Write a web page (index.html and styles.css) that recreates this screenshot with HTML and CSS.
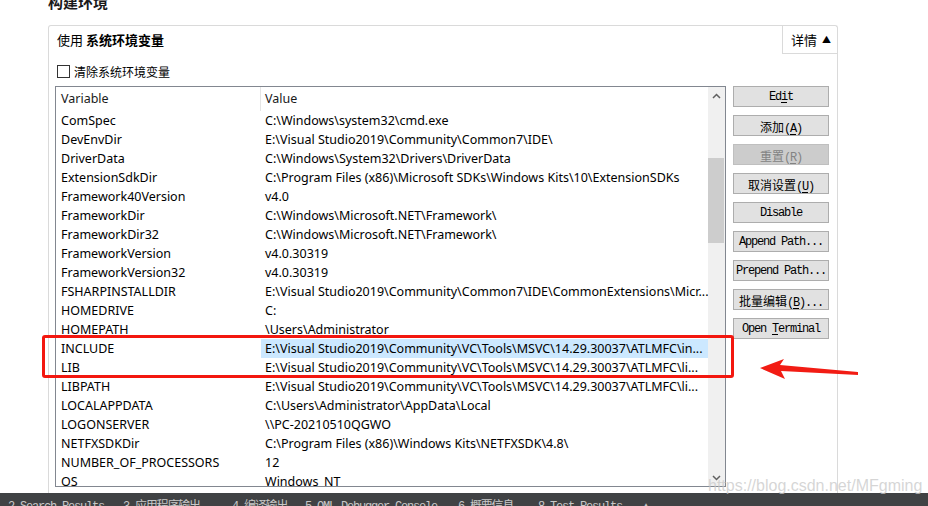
FILE: index.html
```html
<!DOCTYPE html>
<html>
<head>
<meta charset="utf-8">
<link rel="stylesheet" href="styles.css">
</head>
<body>
<div class="page">
  <div class="main">
    <h2 class="title">构建环境</h2>
    <div class="panel">
      <div class="ph">
        <div class="ph-text">使用 <b>系统环境变量</b></div>
        <div class="details">详情 <span class="tri">▲</span></div>
      </div>
      <label class="chk"><span class="box"></span>清除系统环境变量</label>
      <div class="body">
        <div class="list">
          <div class="cols">
            <div class="hdr"><div class="c1 hc1">Variable</div><div class="c2">Value</div></div>
            <div class="row"><div class="c1">ComSpec</div><div class="c2">C:\Windows\system32\cmd.exe</div></div>
            <div class="row"><div class="c1">DevEnvDir</div><div class="c2">E:\Visual Studio2019\Community\Common7\IDE\</div></div>
            <div class="row"><div class="c1">DriverData</div><div class="c2">C:\Windows\System32\Drivers\DriverData</div></div>
            <div class="row"><div class="c1">ExtensionSdkDir</div><div class="c2">C:\Program Files (x86)\Microsoft SDKs\Windows Kits\10\ExtensionSDKs</div></div>
            <div class="row"><div class="c1">Framework40Version</div><div class="c2">v4.0</div></div>
            <div class="row"><div class="c1">FrameworkDir</div><div class="c2">C:\Windows\Microsoft.NET\Framework\</div></div>
            <div class="row"><div class="c1">FrameworkDir32</div><div class="c2">C:\Windows\Microsoft.NET\Framework\</div></div>
            <div class="row"><div class="c1">FrameworkVersion</div><div class="c2">v4.0.30319</div></div>
            <div class="row"><div class="c1">FrameworkVersion32</div><div class="c2">v4.0.30319</div></div>
            <div class="row"><div class="c1">FSHARPINSTALLDIR</div><div class="c2">E:\Visual Studio2019\Community\Common7\IDE\CommonExtensions\Micr...</div></div>
            <div class="row"><div class="c1">HOMEDRIVE</div><div class="c2">C:</div></div>
            <div class="row"><div class="c1">HOMEPATH</div><div class="c2">\Users\Administrator</div></div>
            <div class="row sel"><div class="c1">INCLUDE</div><div class="c2">E:\Visual Studio2019\Community\VC\Tools\MSVC\14.29.30037\ATLMFC\in...</div></div>
            <div class="row"><div class="c1">LIB</div><div class="c2">E:\Visual Studio2019\Community\VC\Tools\MSVC\14.29.30037\ATLMFC\li...</div></div>
            <div class="row"><div class="c1">LIBPATH</div><div class="c2">E:\Visual Studio2019\Community\VC\Tools\MSVC\14.29.30037\ATLMFC\li...</div></div>
            <div class="row"><div class="c1">LOCALAPPDATA</div><div class="c2">C:\Users\Administrator\AppData\Local</div></div>
            <div class="row"><div class="c1">LOGONSERVER</div><div class="c2">\\PC-20210510QGWO</div></div>
            <div class="row"><div class="c1">NETFXSDKDir</div><div class="c2">C:\Program Files (x86)\Windows Kits\NETFXSDK\4.8\</div></div>
            <div class="row"><div class="c1">NUMBER_OF_PROCESSORS</div><div class="c2">12</div></div>
            <div class="row"><div class="c1">OS</div><div class="c2">Windows_NT</div></div>
          </div>
          <div class="sb">
            <div class="sb-btn"><svg width="9" height="6" viewBox="0 0 9 6"><polyline points="1,5 4.5,1.5 8,5" fill="none" stroke="#606060" stroke-width="1.5"/></svg></div>
            <div class="sb-gap"></div>
            <div class="thumb"></div>
            <div class="sb-fill"></div>
            <div class="sb-btn"><svg width="9" height="6" viewBox="0 0 9 6"><polyline points="1,1 4.5,4.5 8,1" fill="none" stroke="#606060" stroke-width="1.5"/></svg></div>
          </div>
        </div>
        <div class="btns">
          <div class="btn">Ed<u>i</u>t</div>
          <div class="btn"><span class="cj">添加</span>(<u>A</u>)</div>
          <div class="btn dis"><span class="cj">重置</span>(<u>R</u>)</div>
          <div class="btn"><span class="cj">取消设置</span>(<u>U</u>)</div>
          <div class="btn">Disable</div>
          <div class="btn">Append Path...</div>
          <div class="btn">Prepend Path...</div>
          <div class="btn"><span class="cj">批量编辑</span>(<u>B</u>)...</div>
          <div class="btn">Open <u>T</u>erminal</div>
        </div>
      </div>
    </div>
  </div>
  <div class="bar">
    <span class="bi b1">2 Search Results</span>
    <span class="bi b2">3 应用程序输出</span>
    <span class="bi b3">4 编译输出</span>
    <span class="bi b4">5 QML Debugger Console</span>
    <span class="bi b5">6 概要信息</span>
    <span class="bi b6">8 Test Results</span>
    <span class="bi b7">▲</span>
  </div>
  <div class="mark"></div>
  <svg class="arrow" width="110" height="30" viewBox="0 0 110 30">
    <polygon points="5,13 29,4 25,10 103,17 103,20 26,16 30,24" fill="#f21c14"/>
  </svg>
  <div class="wm">https://blog.csdn.net/MFgming</div>
</div>
</body>
</html>
```
FILE: styles.css
```css
* { box-sizing: border-box; }
body {
  margin: 0;
  font-family: "Noto Sans", "Noto Sans CJK SC", sans-serif;
  color: #000;
  background: #fff;
}
.page {
  position: relative;
  width: 928px;
  height: 506px;
  overflow: hidden;
  display: flex;
  flex-direction: column;
}
.main {
  flex: none;
  height: 493px;
  overflow: hidden;
  padding-left: 48px;
}
.title {
  margin: -8px 0 13px;
  font: bold 15px/20px "Noto Sans CJK SC", sans-serif;
  color: #1a1a1a;
}
.panel {
  width: 790px;
  height: 600px;
  border: 1px solid #dadada;
  border-bottom: none;
  border-radius: 3px 3px 0 0;
}
.ph {
  display: flex;
  height: 28px;
}
.ph-text {
  flex: 1;
  padding-left: 8px;
  font: 13px/28px "Noto Sans CJK SC", sans-serif;
}
.ph-text b { font-weight: bold; }
.details {
  width: 55px;
  height: 28px;
  border-left: 1px solid #dadada;
  border-bottom: 1px solid #dadada;
  font: 13px/27px "Noto Sans CJK SC", sans-serif;
  padding-left: 8px;
}
.tri { font-size: 9px; vertical-align: 2px; margin-left: 2px; }
.chk {
  display: flex;
  align-items: center;
  gap: 4px;
  height: 19px;
  margin: 8px 0 5px 8px;
  font: 12px/19px "Noto Sans CJK SC", sans-serif;
}
.box {
  width: 13px;
  height: 13px;
  border: 1px solid #333;
  background: #fff;
}
.body {
  display: flex;
  gap: 7px;
  padding-left: 6px;
}
.list {
  width: 671px;
  height: 401px;
  border: 1px solid #828790;
  display: flex;
  overflow: hidden;
}
.cols {
  flex: 1;
  overflow: hidden;
  font-size: 12.5px;
}
.hdr {
  display: flex;
  height: 24px;
  line-height: 24px;
  color: #1a1a1a;
}
.row {
  display: flex;
  height: 19px;
  line-height: 19px;
  white-space: nowrap;
}
.c1 {
  width: 205px;
  flex: none;
  padding-left: 5px;
  overflow: hidden;
}
.hc1 { border-right: 1px solid #e5e5e5; }
.c2 {
  flex: 1;
  padding-left: 4px;
  overflow: hidden;
  white-space: nowrap;
}
.sel .c2 { background: #cce8ff; }
.sb {
  width: 17px;
  flex: none;
  background: #f0f0f0;
  display: flex;
  flex-direction: column;
}
.sb-btn {
  height: 17px;
  display: flex;
  align-items: center;
  justify-content: center;
}
.sb-gap { height: 54px; }
.thumb { height: 85px; background: #cdcdcd; margin: 0 1px 0 0; }
.sb-fill { flex: 1; }
.btns {
  display: flex;
  flex-direction: column;
  gap: 8px;
}
.btn {
  width: 96px;
  height: 21px;
  border: 1px solid #adadad;
  background: #e1e1e1;
  font: 12px/19px "Liberation Mono", "Noto Sans CJK SC", monospace;
  letter-spacing: -1.2px;
  text-align: center;
  white-space: nowrap;
  padding-top: 1px;
}
.btn .cj { letter-spacing: 0; font-family: "Noto Sans CJK SC", sans-serif; }
.btn u { text-underline-offset: 2px; }
.dis { background: #cccccc; border-color: #bfbfbf; color: #838383; }
.bar {
  flex: none;
  height: 13px;
  background: #404244;
  overflow: hidden;
  display: flex;
  padding: 6px 0 0 8px;
  color: #c8c8c8;
  font: 12px/16px "Liberation Mono", "Noto Sans CJK SC", monospace;
  letter-spacing: -1.2px;
  white-space: nowrap;
}
.bi { flex: none; overflow: hidden; }
.b1 { width: 115px; }
.b2 { width: 109px; }
.b3 { width: 73px; }
.b4 { width: 153px; }
.b5 { width: 80px; }
.b6 { width: 105px; }
.b7 { width: 20px; font-size: 10px; }
.mark {
  position: absolute;
  left: 42px;
  top: 335px;
  width: 692px;
  height: 43px;
  border: 3px solid #f3170f;
  border-radius: 3px;
}
.arrow {
  position: absolute;
  left: 755px;
  top: 355px;
}
.wm {
  position: absolute;
  left: 708px;
  top: 476px;
  font: 16px/20px "Liberation Sans", sans-serif;
  color: rgba(200, 200, 200, 0.75);
  white-space: nowrap;
}
```
